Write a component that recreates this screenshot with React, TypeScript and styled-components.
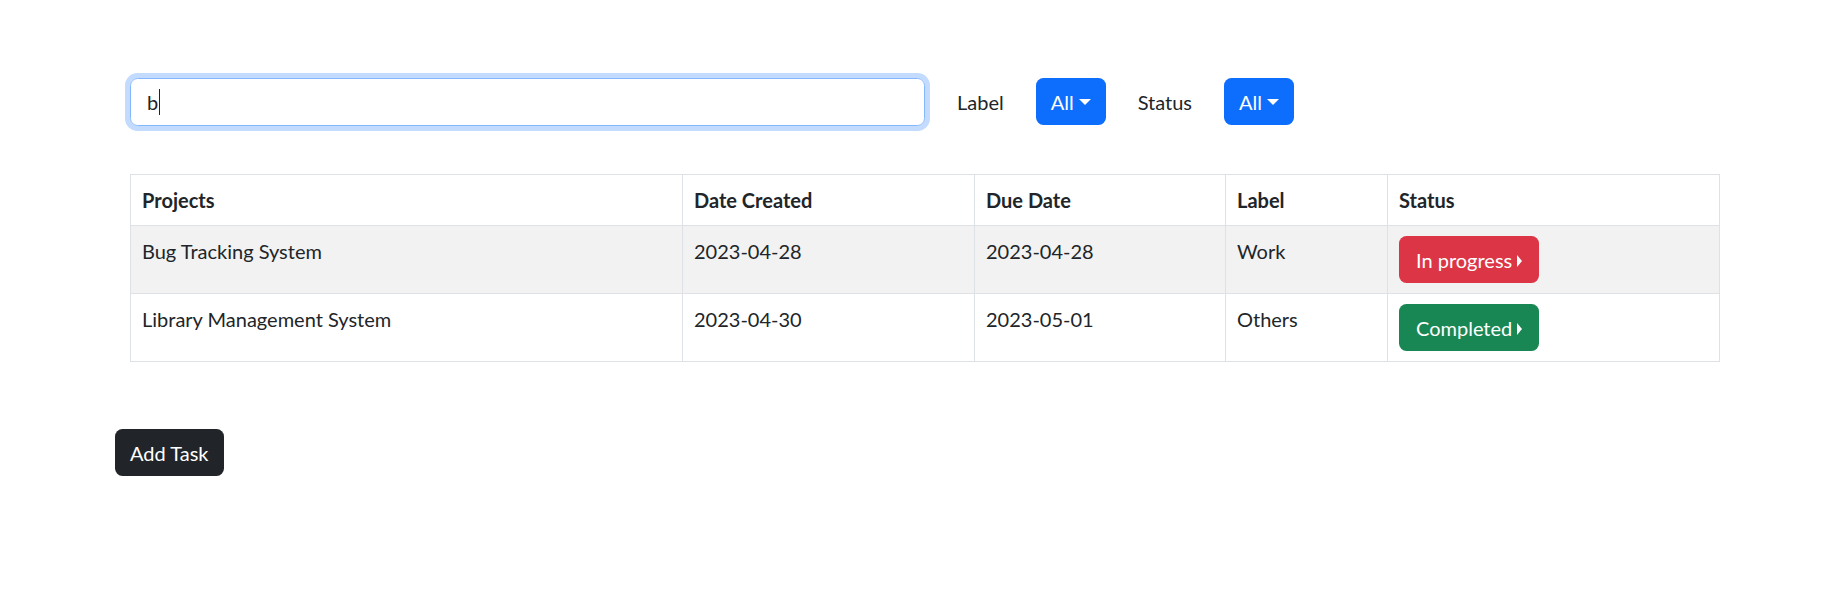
import styled, { createGlobalStyle } from "styled-components";

const GlobalStyle = createGlobalStyle`
  * { box-sizing: border-box; }
  body {
    margin: 0;
    background: #ffffff;
    color: #212529;
    font-family: Lato, "Noto Sans", sans-serif;
    font-size: 20px;
    line-height: 1.5;
  }
`;

type Task = {
    project: string;
    created: string;
    due: string;
    label: string;
    status: "progress" | "done";
};

const tasks: Task[] = [
    { project: "Bug Tracking System", created: "2023-04-28", due: "2023-04-28", label: "Work", status: "progress" },
    { project: "Library Management System", created: "2023-04-30", due: "2023-05-01", label: "Others", status: "done" },
];

const columns = [
    { title: "Projects", width: 552 },
    { title: "Date Created", width: 292 },
    { title: "Due Date", width: 251 },
    { title: "Label", width: 162 },
    { title: "Status", width: 332 },
];

export default function App() {
    return (
        <Page>
            <GlobalStyle />
            <Inset>
                <FilterBar>
                    <SearchBox>
                        b<Caret />
                    </SearchBox>
                    <FilterLabel>Label</FilterLabel>
                    <DropdownButton>All</DropdownButton>
                    <FilterLabel>Status</FilterLabel>
                    <DropdownButton>All</DropdownButton>
                </FilterBar>

                <Table>
                    <colgroup>
                        {columns.map((c) => (
                            <col key={c.title} style={{ width: c.width }} />
                        ))}
                    </colgroup>
                    <thead>
                        <tr>
                            {columns.map((c) => (
                                <Th key={c.title}>{c.title}</Th>
                            ))}
                        </tr>
                    </thead>
                    <tbody>
                        {tasks.map((t, i) => (
                            <Row key={t.project} striped={i % 2 === 0}>
                                <Td>{t.project}</Td>
                                <Td>{t.created}</Td>
                                <Td>{t.due}</Td>
                                <Td>{t.label}</Td>
                                <Td>
                                    <StatusButton variant={t.status}>
                                        {t.status === "progress" ? "In progress" : "Completed"}
                                    </StatusButton>
                                </Td>
                            </Row>
                        ))}
                    </tbody>
                </Table>
            </Inset>

            <AddButton>Add Task</AddButton>
        </Page>
    );
}

const Page = styled.div`
    padding: 78px 123px 40px 115px;
`;

const Inset = styled.div`
    padding-left: 15px;
`;

const FilterBar = styled.div`
    display: flex;
    align-items: flex-start;
    gap: 32px;
`;

const SearchBox = styled.div`
    width: 795px;
    height: 48px;
    display: flex;
    align-items: center;
    padding: 0 16px;
    border: 1px solid #86b7fe;
    border-radius: 7.5px;
    box-shadow: 0 0 0 5px rgba(13, 110, 253, 0.25);
    color: #212529;
    font-size: 20px;
`;

const Caret = styled.span`
    display: inline-block;
    width: 1px;
    height: 26px;
    margin-left: 1px;
    background: #212529;
`;

const FilterLabel = styled.span`
    align-self: center;
    font-size: 20px;
    color: #212529;
`;

const DropdownButton = styled.button`
    height: 47px;
    padding: 0 15px;
    border: none;
    border-radius: 7.5px;
    background: #0d6efd;
    color: #ffffff;
    font-family: inherit;
    font-size: 20px;
    line-height: 1.5;

    &::after {
        content: "";
        display: inline-block;
        margin-left: 5px;
        vertical-align: 5px;
        border-top: 6px solid currentColor;
        border-left: 6px solid transparent;
        border-right: 6px solid transparent;
    }
`;

const Table = styled.table`
    width: 1589px;
    margin-top: 48px;
    table-layout: fixed;
    border-collapse: collapse;
    border: 1px solid #dee2e6;
`;

const Th = styled.th`
    padding: 10px 11px;
    text-align: left;
    font-weight: 700;
    border: 1px solid #dee2e6;
    vertical-align: top;
`;

const Row = styled.tr<{ striped: boolean }>`
    background: ${({ striped }) => (striped ? "#f2f2f2" : "#ffffff")};
`;

const Td = styled.td`
    padding: 10px 11px;
    border: 1px solid #dee2e6;
    vertical-align: top;
`;

const StatusButton = styled.button<{ variant: "progress" | "done" }>`
    height: 47px;
    padding: 0 17px;
    border: none;
    border-radius: 7.5px;
    background: ${({ variant }) => (variant === "progress" ? "#dc3545" : "#198754")};
    color: #ffffff;
    font-family: inherit;
    font-size: 20px;
    line-height: 1.5;

    &::after {
        content: "";
        display: inline-block;
        margin-left: 5px;
        vertical-align: 1px;
        border-left: 5px solid currentColor;
        border-top: 6px solid transparent;
        border-bottom: 6px solid transparent;
    }
`;

const AddButton = styled.button`
    display: block;
    margin-top: 67px;
    height: 47px;
    padding: 0 15px;
    border: none;
    border-radius: 7.5px;
    background: #212529;
    color: #ffffff;
    font-family: inherit;
    font-size: 20px;
    line-height: 1.5;
`;
